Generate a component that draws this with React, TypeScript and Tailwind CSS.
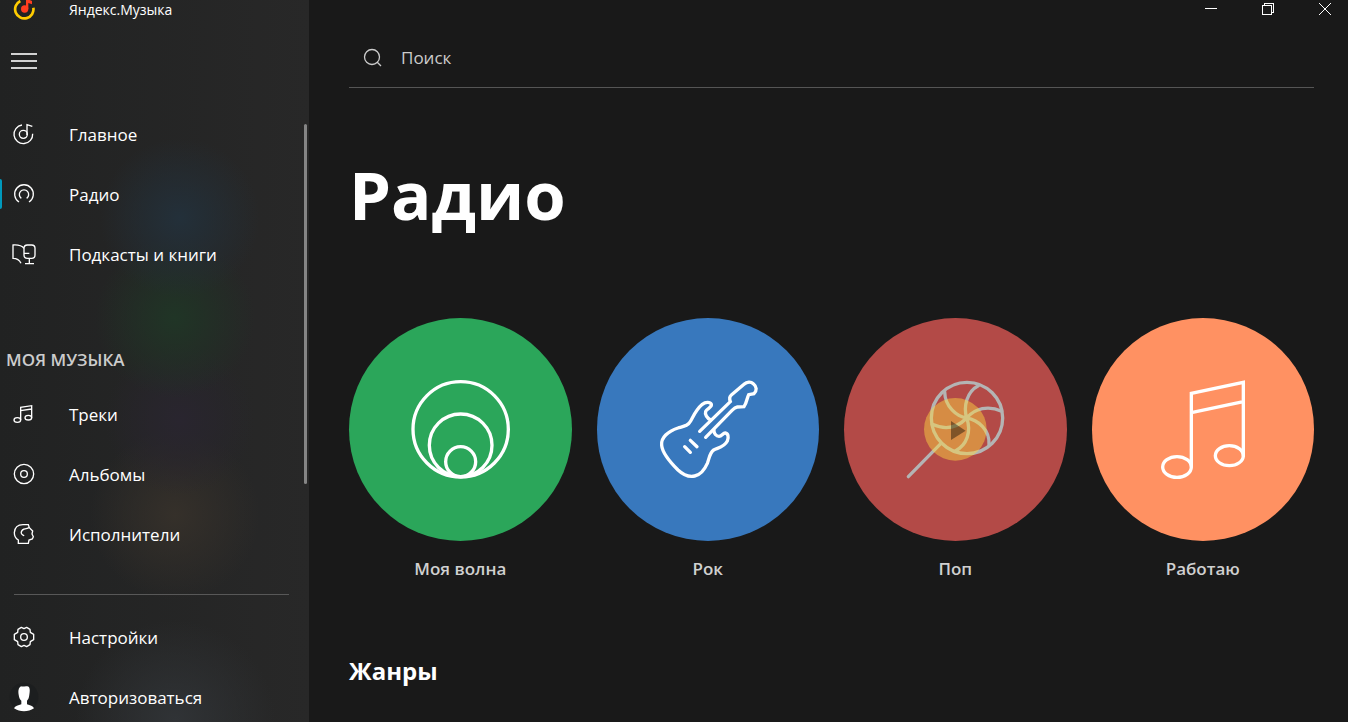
import type { ReactNode } from 'react'

const Glyph = ({ children }: { children: ReactNode }) => (
    <svg viewBox="0 0 90 90" className="size-[30px] shrink-0" fill="none" stroke="currentColor" strokeWidth={4} aria-hidden="true">
        {children}
    </svg>
)

const HomeIcon = () => (
    <Glyph>
        <path d="M39 18A28 28 0 1 0 71 44" />
        <circle cx="43" cy="46" r="12" />
        <path d="M54 48V17L70 22" />
    </Glyph>
)

const RadioIcon = () => (
    <Glyph>
        <path d="M30 69A28 28 0 1 1 60 69" />
        <path d="M37 58A14 14 0 1 1 53 58" />
    </Glyph>
)

const PodcastIcon = () => (
    <Glyph>
        <path d="M45 28C38 19 26 17 12 18V58C24 58 32 64 36 73" />
        <rect x="45" y="18" width="33" height="40" rx="10" />
        <path d="M61 58V73M48 74H75M45 43H61" />
    </Glyph>
)

const TracksIcon = () => (
    <Glyph>
        <ellipse cx="25" cy="63" rx="10" ry="7" />
        <ellipse cx="58" cy="56" rx="10" ry="7" />
        <path d="M35 63V25L68 20V56M35 35L68 30" />
    </Glyph>
)

const AlbumsIcon = () => (
    <Glyph>
        <circle cx="45" cy="45" r="29" />
        <circle cx="45" cy="45" r="10" />
    </Glyph>
)

const ArtistsIcon = () => (
    <Glyph>
        <path d="M28 73V63C19 58 16 50 16 41C17 26 26 17 42 17H58L61 26L71 36L69 45L73 53L70 60L60 63L58 73Z" />
        <path d="M60 25C57 29 51 28 46 30C37 33 35 41 38 45C40 48 43 47 45 51" />
    </Glyph>
)

const SettingsIcon = () => (
    <Glyph>
        <path d="M37 16L45 20L53 16L63 22L64 31L74 37V53L64 59L63 68L53 74L45 70L37 74L27 68L26 59L16 53V37L26 31L27 22Z" strokeLinejoin="round" />
        <circle cx="45" cy="45" r="10" />
    </Glyph>
)

const UserIcon = () => (
    <svg viewBox="0 0 90 90" className="size-[30px] shrink-0" aria-hidden="true">
        <circle cx="45" cy="45" r="43" fill="#1c1e1f" />
        <path d="M36 13C44 15 50 10 59 14C64 20 62 30 61 38C60 48 57 53 54 56V67C63 70 72 72 75 79C58 91 32 91 15 79C18 72 28 70 37 67V56C33 52 30 47 29 38C27 28 28 18 36 13Z" fill="#fff" />
    </svg>
)

const NAV_ITEMS = [
    { label: 'Главное', icon: <HomeIcon /> },
    { label: 'Радио', icon: <RadioIcon />, active: true },
    { label: 'Подкасты и книги', icon: <PodcastIcon /> },
]

const MUSIC_ITEMS = [
    { label: 'Треки', icon: <TracksIcon /> },
    { label: 'Альбомы', icon: <AlbumsIcon /> },
    { label: 'Исполнители', icon: <ArtistsIcon /> },
]

const STATIONS = [
    {
        label: 'Моя волна',
        color: 'bg-[#2ba65a]',
        art: (
            <>
                <circle cx="182" cy="178" r="143" />
                <circle cx="182" cy="226" r="94" />
                <circle cx="182" cy="275" r="45" />
            </>
        ),
    },
    {
        label: 'Рок',
        color: 'bg-[#3878bd]',
        art: (
            <>
                <path d="M155 184L247 95C244 87 244 80 250 75L288 43C297 35 308 34 316 41C327 50 327 62 318 71L302 74C296 86 297 97 288 110L268 111C261 112 257 116 252 121L173 202" />
                <path d="M188 150C177 145 170 133 173 124C177 115 193 112 190 103C186 95 172 96 163 103C145 118 138 135 128 153C120 168 108 169 90 174C60 184 38 203 41 226C43 248 62 272 90 300C105 314 122 322 140 318C160 314 170 298 178 280C184 265 185 248 197 240C210 233 228 232 238 213C243 200 240 190 232 189C225 188 222 199 213 199C205 199 197 190 198 181" />
                <path d="M110 230L127 247M127 211L147 230" />
            </>
        ),
    },
    {
        label: 'Поп',
        color: 'bg-[#b34a47]',
        art: (
            <>
                <g stroke="#b4b4b4">
                    <circle cx="216" cy="144" r="107" />
                    <path d="M138 220L40 320" />
                    <path d="M215 144C205 110 215 65 250 47M215 144C240 115 280 105 320 124M215 144C250 150 285 180 282 224M215 144C230 185 215 225 182 242M215 144C185 175 150 180 112 163M215 144C185 140 150 110 149 65" />
                </g>
                <circle cx="181" cy="178" r="94" fill="#ffd941" fillOpacity="0.46" stroke="none" />
                <path d="M168 153L212 182L168 210Z" fill="#000" fillOpacity="0.4" stroke="none" />
            </>
        ),
    },
    {
        label: 'Работаю',
        color: 'bg-[#ff9162]',
        art: (
            <>
                <ellipse cx="102" cy="291" rx="43" ry="31" />
                <ellipse cx="259" cy="257" rx="42" ry="30" />
                <path d="M145 288V70L301 37V257M145 128L301 95" />
            </>
        ),
    },
]

export default function App() {
    return (
        <div className="flex h-screen overflow-hidden bg-[#191919] font-['Open_Sans',sans-serif] text-white">
            <Sidebar />
            <main className="flex min-w-0 flex-1 flex-col">
                <WindowControls />
                <div className="flex flex-col pr-[34px] pl-10">
                    <label className="mt-[10px] flex h-[60px] items-center gap-[18px] border-b border-[#555] pl-[14px] text-[#ccc]">
                        <svg viewBox="0 0 20 20" className="size-5 shrink-0" fill="none" stroke="currentColor" strokeWidth={1.3} aria-hidden="true">
                            <circle cx="9" cy="9" r="7.500" />
                            <path d="M14 14L18 18" />
                        </svg>
                        <input type="search" placeholder="Поиск" aria-label="Поиск" className="w-full bg-transparent text-[17px] outline-none placeholder:text-[#ccc]" />
                    </label>
                    <h1 className="mt-[58px] text-[67px] leading-[96px] font-bold">Радио</h1>
                    <div className="mt-[76px] grid grid-cols-4 gap-[25px]">
                        {STATIONS.map((station) => (
                            <button key={station.label} type="button" className="flex flex-col items-center gap-4">
                                <span className={`flex aspect-square w-full items-center justify-center rounded-full ${station.color}`}>
                                    <svg viewBox="0 -3 360 360" className="size-[120px]" fill="none" stroke="#fff" strokeWidth={10} strokeLinecap="round" aria-hidden="true">
                                        {station.art}
                                    </svg>
                                </span>
                                <span className="text-[17px] leading-6 font-semibold text-[#d0d0d0]">{station.label}</span>
                            </button>
                        ))}
                    </div>
                    <h2 className="mt-[74px] text-2xl font-bold">Жанры</h2>
                </div>
            </main>
        </div>
    )
}

const Sidebar = () => {
    return (
        <aside className="relative flex w-[309px] shrink-0 flex-col bg-[radial-gradient(circle_at_180px_218px,#23303a_0,transparent_80px),radial-gradient(circle_at_175px_318px,#203526_0,transparent_80px),radial-gradient(circle_at_180px_420px,#29252f_0,transparent_75px),radial-gradient(circle_at_175px_515px,#35302a_0,transparent_85px),radial-gradient(circle_at_175px_720px,#303336_0,transparent_100px),linear-gradient(to_right,#212222,#282828)]">
            <div className="flex h-5 items-center gap-[30px] pl-[9px]">
                <Logo />
                <span className="text-sm leading-5">Яндекс.Музыка</span>
            </div>
            <button type="button" aria-label="Меню" className="mt-[21px] ml-[11px] flex h-10 w-[26px] shrink-0 flex-col justify-center gap-[5px]">
                <span className="h-0.5 w-full bg-[#d2d2d2]" />
                <span className="h-0.5 w-full bg-[#d2d2d2]" />
                <span className="h-0.5 w-full bg-[#d2d2d2]" />
            </button>
            <nav className="mt-[23px] flex shrink-0 flex-col">
                {NAV_ITEMS.map((item) => (
                    <NavItem key={item.label} {...item} />
                ))}
                <h2 className="mt-[61px] mb-[9px] pl-[6px] text-[17px] leading-[30px] font-semibold text-[#ccc]">МОЯ МУЗЫКА</h2>
                {MUSIC_ITEMS.map((item) => (
                    <NavItem key={item.label} {...item} />
                ))}
            </nav>
            <hr className="mt-[30px] mr-5 ml-[14px] border-[#585858]" />
            <div className="mt-3 flex shrink-0 flex-col">
                <NavItem label="Настройки" icon={<SettingsIcon />} />
                <NavItem label="Авторизоваться" icon={<UserIcon />} />
            </div>
            <div className="absolute top-[124px] right-[2px] h-[360px] w-[3px] rounded-full bg-[#858585]" />
        </aside>
    )
}

const NavItem = ({ label, icon, active }: { label: string, icon: ReactNode, active?: boolean }) => {
    return (
        <a href="#" className="relative flex h-[60px] shrink-0 items-center gap-[30px] pl-[9px] text-[17px]">
            {active && <span className="absolute top-[15px] left-0 h-[30px] w-0.5 rounded-r bg-[#0099bc]" />}
            {icon}
            <span className="pt-0.5">{label}</span>
        </a>
    )
}

const Logo = () => {
    return (
        <svg viewBox="0 0 90 90" className="size-[30px] shrink-0" fill="none" aria-hidden="true">
            <path d="M34 18A27.500 27.500 0 1 0 73 38" stroke="#fc0" strokeWidth="8" />
            <circle cx="47" cy="42" r="11" fill="#ff3d1f" />
            <path d="M51 42V10L69 18V28L58 24V42Z" fill="#ff3d1f" />
        </svg>
    )
}

const WindowControls = () => {
    return (
        <div className="flex h-[18px] items-center justify-end gap-[11px]">
            <button type="button" aria-label="Свернуть" className="flex h-full w-[46px] items-center justify-center">
                <svg viewBox="0 0 12 12" className="size-3" stroke="#fff" shapeRendering="crispEdges">
                    <path d="M0 5.500H12" />
                </svg>
            </button>
            <button type="button" aria-label="Развернуть" className="flex h-full w-[46px] items-center justify-center">
                <svg viewBox="0 0 12 12" className="size-3" fill="none" stroke="#fff" shapeRendering="crispEdges">
                    <path d="M0.500 2.500H9.500V11.500H0.500ZM2.500 2.500V0.500H11.500V9.500H9.500" />
                </svg>
            </button>
            <button type="button" aria-label="Закрыть" className="flex h-full w-[46px] items-center justify-center">
                <svg viewBox="0 0 12 12" className="size-3" stroke="#fff">
                    <path d="M0 0L12 12M12 0L0 12" />
                </svg>
            </button>
        </div>
    )
}
